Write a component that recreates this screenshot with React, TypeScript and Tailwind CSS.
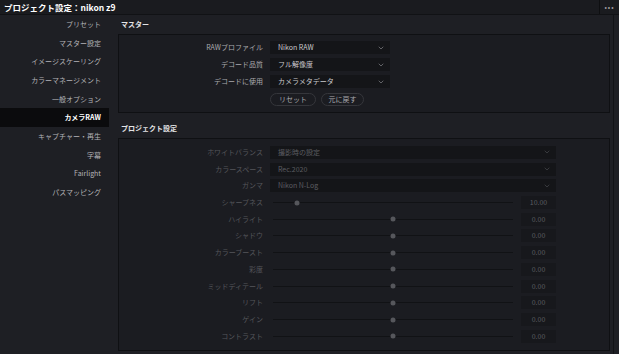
import { ChevronDown } from "lucide-react";

const nav = [
  "プリセット",
  "マスター設定",
  "イメージスケーリング",
  "カラーマネージメント",
  "一般オプション",
  "カメラRAW",
  "キャプチャー・再生",
  "字幕",
  "Fairlight",
  "パスマッピング",
];

const sliders: { label: string; pos: number; value: string }[] = [
  { label: "シャープネス", pos: 10, value: "10.00" },
  { label: "ハイライト", pos: 50, value: "0.00" },
  { label: "シャドウ", pos: 50, value: "0.00" },
  { label: "カラーブースト", pos: 50, value: "0.00" },
  { label: "彩度", pos: 50, value: "0.00" },
  { label: "ミッドディテール", pos: 50, value: "0.00" },
  { label: "リフト", pos: 50, value: "0.00" },
  { label: "ゲイン", pos: 50, value: "0.00" },
  { label: "コントラスト", pos: 50, value: "0.00" },
];

function Select({ value, dim, wide }: { value: string; dim?: boolean; wide?: boolean }) {
  return (
    <div
      className={`flex h-[13px] items-center justify-between bg-[#141518] pl-[8px] pr-[5px] ${
        wide ? "w-[286px]" : "w-[120px]"
      } ${dim ? "text-[#5c5d62]" : "text-[#c9c9cc]"}`}
    >
      <span>{value}</span>
      <ChevronDown size={8} strokeWidth={2} className={dim ? "text-[#4a4b50]" : "text-[#8a8a8e]"} />
    </div>
  );
}

function Row({ label, dim, children }: { label: string; dim?: boolean; children: React.ReactNode }) {
  return (
    <div className="flex items-center">
      <div className={`w-[145px] pr-[1px] text-right ${dim ? "text-[#55565b]" : "text-[#a9a9ad]"}`}>{label}</div>
      <div className="ml-[6px] flex items-center">{children}</div>
    </div>
  );
}

export default function App() {
  return (
    <div
      className="flex h-[354px] w-[619px] flex-col overflow-hidden bg-[#1e1f24] text-[7px] leading-none"
      style={{ fontFamily: '"Noto Sans CJK JP", "Noto Sans", sans-serif' }}
    >
      <header className="flex h-[15px] shrink-0 items-center justify-between border-b border-[#111215] bg-[#1a1b1f]">
        <span className="pl-[4px] text-[8.5px] font-bold text-white">プロジェクト設定：nikon z9</span>
        <div className="flex h-full w-[20px] items-center justify-center border-l border-[#0e0f11] text-[#9a9a9e]">
          <span className="text-[7px] tracking-[1px]">•••</span>
        </div>
      </header>

      <div className="flex min-h-0 flex-1">
        <nav className="flex w-[109px] shrink-0 flex-col">
          {nav.map((n) => (
            <div
              key={n}
              className={`flex h-[18.7px] items-center justify-end pr-[8px] ${
                n === "カメラRAW" ? "bg-[#0b0b0d] font-bold text-white" : "text-[#b3b3b7]"
              }`}
            >
              {n}
            </div>
          ))}
        </nav>

        <main className="flex min-w-0 flex-1 flex-col border-r border-[#121316] pl-[9px] pr-[3px] mr-[5px]">
          <div className="flex h-[19px] items-center pl-[3px] font-bold text-[#e4e4e6]">マスター</div>
          <section className="flex flex-col gap-[4px] border border-[#0f1013] bg-[#1b1c21] pt-[6px] pb-[6px]">
            <Row label="RAWプロファイル">
              <Select value="Nikon RAW" />
            </Row>
            <Row label="デコード品質">
              <Select value="フル解像度" />
            </Row>
            <Row label="デコードに使用">
              <Select value="カメラメタデータ" />
            </Row>
            <div className="ml-[151px] flex gap-[5px] pt-[1px]">
              <button className="h-[13px] w-[46px] rounded-full border border-[#35363b] text-[#a9a9ad]">リセット</button>
              <button className="h-[13px] w-[43px] rounded-full border border-[#35363b] text-[#a9a9ad]">元に戻す</button>
            </div>
          </section>

          <div className="flex h-[25px] items-center pl-[3px] pt-[6px] font-bold text-[#e4e4e6]">プロジェクト設定</div>
          <section className="flex flex-col border border-[#0f1013] bg-[#1b1c21] pt-[5px] pb-[5px]">
            {["ホワイトバランス", "カラースペース", "ガンマ"].map((l, i) => (
              <div key={l} className="flex h-[16.73px] items-center">
                <Row label={l} dim>
                  <Select value={["撮影時の設定", "Rec.2020", "Nikon N-Log"][i]} dim wide />
                </Row>
              </div>
            ))}
            {sliders.map((s) => (
              <div key={s.label} className="flex h-[16.73px] items-center">
                <Row label={s.label} dim>
                  <div className="flex items-center">
                    <div className="relative ml-[3px] h-px w-[240px] bg-[#111215]">
                      <div
                        className="absolute top-1/2 h-[5px] w-[5px] -translate-x-1/2 -translate-y-1/2 rounded-full bg-[#56575c]"
                        style={{ left: `${s.pos}%` }}
                      />
                    </div>
                    <div className="ml-[8px] flex h-[13px] w-[35px] items-center justify-center bg-[#17181c] text-[#5c5d62]">
                      {s.value}
                    </div>
                  </div>
                </Row>
              </div>
            ))}
          </section>
        </main>
      </div>
    </div>
  );
}
